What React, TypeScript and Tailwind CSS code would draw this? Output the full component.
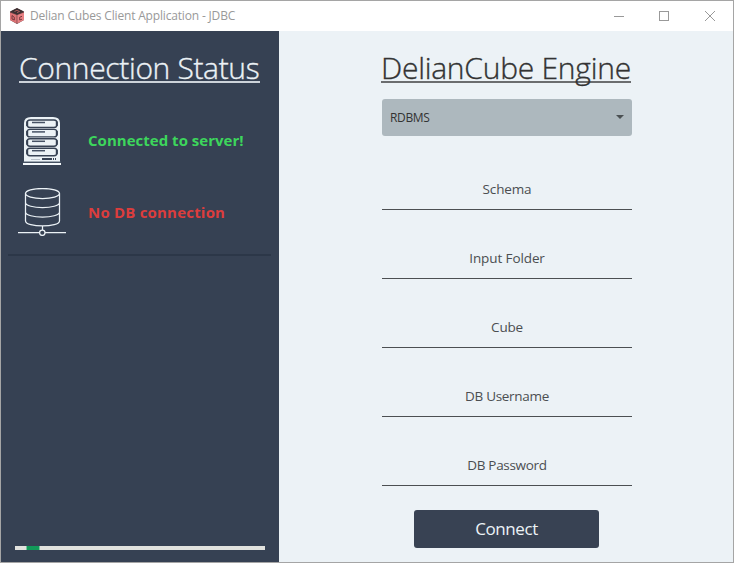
const serverRows = [4.5, 13.9, 23.3, 32.7];

function CubeLogo() {
  return (
    <svg className="h-4 w-4" viewBox="0 0 16 16">
      <path d="M8 0L15 3.5V12L8 16L1 12V3.5Z" fill="#5d3d40" />
      <path d="M1 4.5L7.7 7V15.5L1 12Z" fill="#df7376" />
      <path d="M8.3 7L15 4.5V12L8.3 15.5Z" fill="#e98184" />
      <path d="M8 .3L14.5 3.6L8 6.6L1.5 3.6Z" fill="#3b3032" />
      <path d="M5.5 3.5L8 2.3L10.5 3.5L8 4.6" fill="none" stroke="#b55d60" strokeWidth=".9" />
      <path d="M3 7.5V11L5.3 12V9.3L3 7.5M13 8.3L10.7 9.2V12L13 11.2" fill="none" stroke="#6b3338" strokeWidth=".9" />
    </svg>
  );
}

function ServerIcon() {
  return (
    <svg className="h-12 w-[38px]" viewBox="0 0 38 48">
      <path d="M1 45V6Q1 0 8 0H30Q37 0 37 6V45Z" fill="#ecf2f6" />
      {serverRows.map((y) => (
        <g key={y}>
          <rect x="4" y={y - 1.5} width="30" height="7.5" rx="3" fill="#ecf2f6" stroke="#364153" strokeWidth="1.4" />
          <path d={`M4.2 ${y}v4.5M33.8 ${y}v4.5`} stroke="#364153" strokeWidth="2" />
          <path d={`M9 ${y + 1}h13`} stroke="#465164" strokeWidth="1.5" />
        </g>
      ))}
      <path d="M8 42.5h9" stroke="#b8c0c9" />
      <path d="M19 42h10M30 42h1M32 42h1" stroke="#364153" strokeWidth="2" />
      <path d="M0 45h38" stroke="#536071" />
      <path d="M0 47h38" stroke="#f5f9fc" strokeWidth="2" />
    </svg>
  );
}

function DatabaseIcon() {
  return (
    <svg className="h-12 w-12" viewBox="0 0 48 48" fill="none" stroke="#ecf2f6" strokeWidth="1.25">
      <ellipse cx="24.5" cy="5.5" rx="17" ry="5" />
      <path d="M7.5 5.5V33C7.5 39.5 41.5 39.5 41.5 33V5.5M7.5 14.5C7.5 21.2 41.5 21.2 41.5 14.5M7.5 24C7.5 30.7 41.5 30.7 41.5 24" />
      <path d="M24.5 38V42M0 44.5H21.5M27 44.5H48" />
      <circle cx="24.3" cy="44.7" r="2.7" />
    </svg>
  );
}

const fields = [
  { label: "Schema", spacing: "tracking-[-0.15px]" },
  { label: "Input Folder", spacing: "tracking-[-0.1px]" },
  { label: "Cube", spacing: "tracking-[-0.2px]" },
  { label: "DB Username", spacing: "tracking-[-0.3px]" },
  { label: "DB Password", spacing: "tracking-[-0.3px]" },
];

export default function App() {
  return (
    <div className="flex h-[563px] w-[734px] flex-col overflow-hidden border border-[#a5a5a5] bg-white font-['Open_Sans',sans-serif]">
      <header className="flex h-[30px] shrink-0 items-center pl-2">
        <CubeLogo />
        <span className="ml-[5px] whitespace-nowrap text-[12px] leading-4 tracking-[-0.17px] text-[#999]">Delian Cubes Client Application - JDBC</span>
        <div className="ml-auto flex gap-[34px] pr-[17px]">
          <svg className="h-3 w-3" viewBox="0 0 12 12" stroke="#999"><path d="M2 6.5h10" /></svg>
          <svg className="h-3 w-3" viewBox="0 0 12 12" fill="none" stroke="#999"><rect x="1.5" y="1.5" width="9" height="9" /></svg>
          <svg className="h-3 w-3" viewBox="0 0 12 12" stroke="#999"><path d="M1 1l10 10M11 1L1 11" /></svg>
        </div>
      </header>
      <div className="flex min-h-0 flex-1">
        <aside className="flex w-[278px] shrink-0 flex-col bg-[#364153] text-[#ecf2f6]">
          <h1 className="ml-[18px] mt-[17px] h-[35px] w-[241px] whitespace-nowrap border-b-2 border-[#cdd3da] text-[30px] font-light leading-[40px] tracking-[-0.35px] [-webkit-text-stroke:0.35px]">Connection Status</h1>
          <div className="ml-[22px] mt-[34px] flex h-12 items-center">
            <ServerIcon />
            <span className="-mt-0.5 ml-[27px] whitespace-nowrap text-[15px] font-bold leading-5 tracking-[0.02px] text-[#3dd65c]">Connected to server!</span>
          </div>
          <div className="ml-[17px] mt-[23px] flex h-12 items-center">
            <DatabaseIcon />
            <span className="-mt-px ml-[22px] whitespace-nowrap text-[15px] font-bold leading-5 tracking-[0.2px] text-[#dc3d3d]">No DB connection</span>
          </div>
          <div className="ml-[7px] mt-[18px] h-0.5 w-[263px] bg-[#2c3748]" />
          <div className="mb-3 ml-3.5 mt-auto h-1 w-[250px] bg-[#e1e2de] pl-[11px]">
            <div className="h-1 w-[14px] border-x border-[#7cc39d] bg-[#129959]" />
          </div>
        </aside>
        <main className="flex flex-1 flex-col bg-[#ecf2f6] pl-[103px] text-[#333]">
          <h1 className="-ml-px mt-[17px] h-[35px] w-[250px] whitespace-nowrap border-b-2 border-[#6b6d6f] text-[30px] font-light leading-[40px] tracking-[-0.25px] [-webkit-text-stroke:0.35px]">DelianCube Engine</h1>
          <button className="mt-4 flex h-[37px] w-[250px] items-center justify-between rounded-[3px] bg-[#adb8be] pl-2 pr-2 text-[12px]">
            <span className="tracking-[-0.35px]">RDBMS</span>
            <svg className="-mt-0.5 h-1 w-2" viewBox="0 0 8 4"><path d="M0 0h8L4 4Z" fill="#4b5053" /></svg>
          </button>
          <div className="mt-[37px] flex w-[250px] flex-col gap-8">
            {fields.map((field) => (
              <div key={field.label} className={`h-[37px] border-b border-[#4c4f52] pt-[6px] text-center text-[13.5px] leading-5 text-[#4b4e51] ${field.spacing}`}>
                {field.label}
              </div>
            ))}
          </div>
          <button className="ml-8 mt-6 h-[38px] w-[185px] rounded-[3px] bg-[#384253] text-[17px] leading-[38px] tracking-[-0.4px] text-[#ecf2f6]">Connect</button>
        </main>
      </div>
    </div>
  );
}
